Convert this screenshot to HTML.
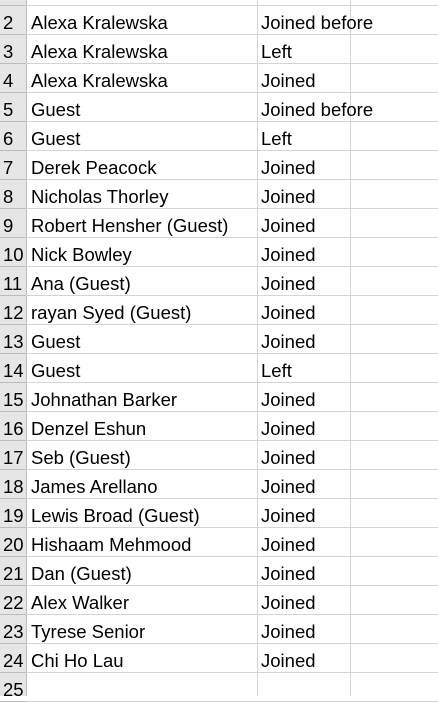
<!DOCTYPE html><html><head><style>
body{margin:0;width:438px;height:696px;overflow:hidden;background:#fff;font-family:"Liberation Sans",sans-serif;font-size:18.5px;color:#000;position:relative}
.hdr{position:absolute;left:0;top:0;width:26px;height:696px;background:#e6e6e6;border-right:1px solid #bcbcbc}
.r{position:absolute;left:0;width:438px;height:29px;border-bottom:1px solid #d4d4d4;box-sizing:border-box}
.r span{position:absolute;top:7px;line-height:20px;white-space:nowrap}
.n{left:3px}.a{left:31px}.b{left:261px}
.v{position:absolute;top:0;height:696px;width:1px;background:#d4d4d4}
.r .hb{position:absolute;left:0;width:26px;bottom:-1px;height:1px;background:#bcbcbc}
</style></head><body>
<div class="hdr"></div>
<div class="v" style="left:257px"></div>
<div class="v" style="left:350px"></div>
<div class="r" style="top:-23px"><i class="hb"></i></div>
<div class="r" style="top:6px"><i class="hb"></i><span class="n">2</span><span class="a">Alexa Kralewska</span><span class="b">Joined before</span></div>
<div class="r" style="top:35px"><i class="hb"></i><span class="n">3</span><span class="a">Alexa Kralewska</span><span class="b">Left</span></div>
<div class="r" style="top:64px"><i class="hb"></i><span class="n">4</span><span class="a">Alexa Kralewska</span><span class="b">Joined</span></div>
<div class="r" style="top:93px"><i class="hb"></i><span class="n">5</span><span class="a">Guest</span><span class="b">Joined before</span></div>
<div class="r" style="top:122px"><i class="hb"></i><span class="n">6</span><span class="a">Guest</span><span class="b">Left</span></div>
<div class="r" style="top:151px"><i class="hb"></i><span class="n">7</span><span class="a">Derek Peacock</span><span class="b">Joined</span></div>
<div class="r" style="top:180px"><i class="hb"></i><span class="n">8</span><span class="a">Nicholas Thorley</span><span class="b">Joined</span></div>
<div class="r" style="top:209px"><i class="hb"></i><span class="n">9</span><span class="a">Robert Hensher (Guest)</span><span class="b">Joined</span></div>
<div class="r" style="top:238px"><i class="hb"></i><span class="n">10</span><span class="a">Nick Bowley</span><span class="b">Joined</span></div>
<div class="r" style="top:267px"><i class="hb"></i><span class="n">11</span><span class="a">Ana (Guest)</span><span class="b">Joined</span></div>
<div class="r" style="top:296px"><i class="hb"></i><span class="n">12</span><span class="a">rayan Syed (Guest)</span><span class="b">Joined</span></div>
<div class="r" style="top:325px"><i class="hb"></i><span class="n">13</span><span class="a">Guest</span><span class="b">Joined</span></div>
<div class="r" style="top:354px"><i class="hb"></i><span class="n">14</span><span class="a">Guest</span><span class="b">Left</span></div>
<div class="r" style="top:383px"><i class="hb"></i><span class="n">15</span><span class="a">Johnathan Barker</span><span class="b">Joined</span></div>
<div class="r" style="top:412px"><i class="hb"></i><span class="n">16</span><span class="a">Denzel Eshun</span><span class="b">Joined</span></div>
<div class="r" style="top:441px"><i class="hb"></i><span class="n">17</span><span class="a">Seb (Guest)</span><span class="b">Joined</span></div>
<div class="r" style="top:470px"><i class="hb"></i><span class="n">18</span><span class="a">James Arellano</span><span class="b">Joined</span></div>
<div class="r" style="top:499px"><i class="hb"></i><span class="n">19</span><span class="a">Lewis Broad (Guest)</span><span class="b">Joined</span></div>
<div class="r" style="top:528px"><i class="hb"></i><span class="n">20</span><span class="a">Hishaam Mehmood</span><span class="b">Joined</span></div>
<div class="r" style="top:557px"><i class="hb"></i><span class="n">21</span><span class="a">Dan (Guest)</span><span class="b">Joined</span></div>
<div class="r" style="top:586px"><i class="hb"></i><span class="n">22</span><span class="a">Alex Walker</span><span class="b">Joined</span></div>
<div class="r" style="top:615px"><i class="hb"></i><span class="n">23</span><span class="a">Tyrese Senior</span><span class="b">Joined</span></div>
<div class="r" style="top:644px"><i class="hb"></i><span class="n">24</span><span class="a">Chi Ho Lau</span><span class="b">Joined</span></div>
<div class="r" style="top:673px"><i class="hb"></i><span class="n">25</span></div>
</body></html>
